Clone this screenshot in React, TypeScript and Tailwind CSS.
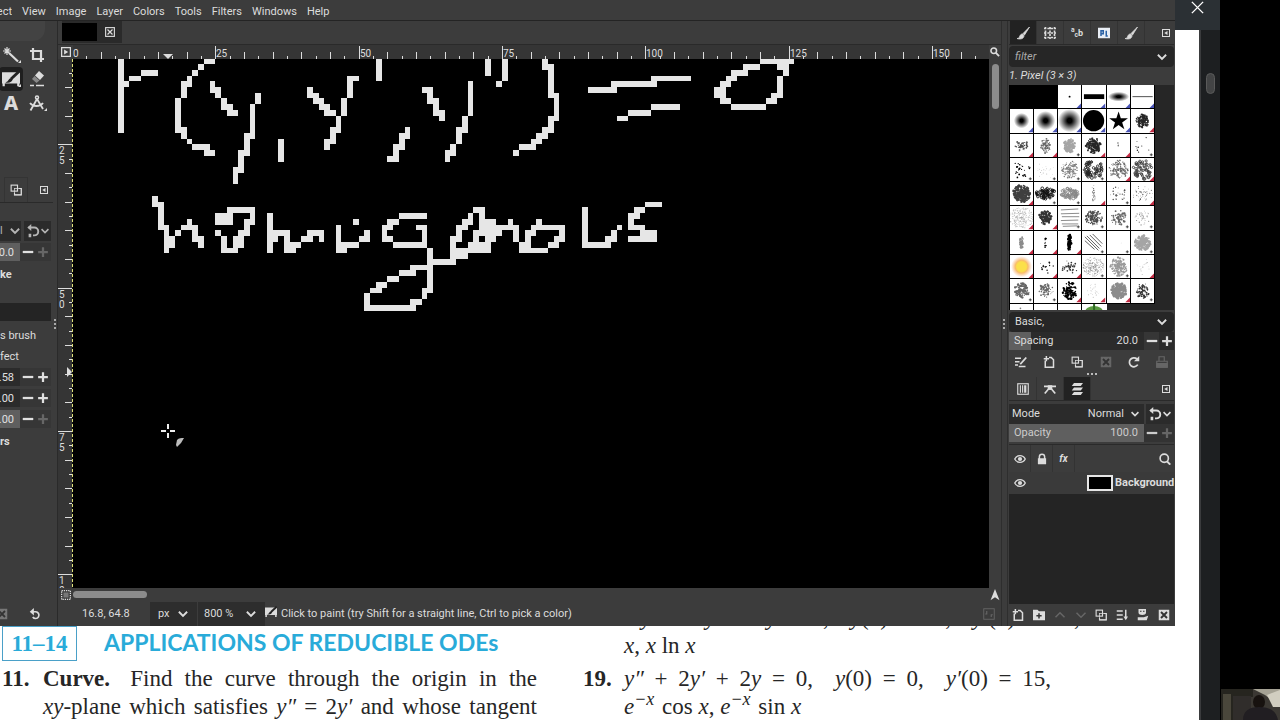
import React, { ReactNode } from "react";
import clsx from "clsx";

// one image pixel at 800 % zoom, in screen pixels
const CELL = 5.733;

type Run = [x: number, y: number, w: number, h: number];
type Tone = "blue" | "red" | "none";

interface BrushFixture {
  kind:
    | "black"
    | "dot"
    | "bar"
    | "oval"
    | "line"
    | "soft"
    | "circle"
    | "star"
    | "sun"
    | "lines"
    | "diagonal"
    | "pepper"
    | "splat";
  mark: Tone;
  size?: number;
  count?: number;
  rx?: number;
  ry?: number;
  dot?: number;
  alpha?: number;
}

const strokes: Run[] = [
  // F
  [8, 10, 1, 13], [9, 14, 1, 1], [10, 13, 2, 1], [12, 12, 3, 1],
  // (
  [23, 10, 2, 1], [22, 11, 1, 1], [21, 12, 1, 1], [20, 13, 1, 2], [19, 14, 1, 3],
  [18, 17, 1, 6], [19, 22, 1, 2], [20, 24, 1, 1], [21, 25, 3, 1], [23, 26, 2, 1],
  // y
  [24, 14, 1, 2], [25, 15, 1, 2], [26, 17, 1, 2], [27, 18, 1, 2], [28, 19, 1, 1],
  [32, 16, 1, 2], [31, 18, 1, 6], [30, 23, 1, 4], [29, 26, 1, 4], [28, 29, 1, 3],
  [36, 24, 1, 4],
  // y'
  [41, 15, 1, 2], [42, 16, 1, 2], [43, 17, 1, 2], [44, 18, 1, 2], [45, 19, 1, 1],
  [46, 20, 1, 3], [45, 22, 1, 3], [44, 24, 1, 2], [47, 17, 1, 3], [48, 13, 1, 4],
  [49, 13, 1, 1], [53, 10, 1, 4],
  [58, 22, 1, 2], [57, 23, 1, 3], [56, 25, 1, 3], [55, 27, 1, 1],
  // y''
  [61, 15, 2, 1], [62, 16, 1, 2], [63, 17, 1, 3], [64, 19, 1, 2], [69, 14, 1, 6],
  [68, 20, 1, 3], [67, 22, 1, 3], [66, 25, 1, 2], [65, 26, 1, 2],
  [72, 10, 1, 3], [75, 10, 1, 4], [74, 14, 1, 1],
  // )
  [82, 10, 1, 2], [83, 11, 1, 6], [84, 16, 1, 5], [83, 20, 1, 3], [82, 22, 1, 2],
  [81, 23, 1, 2], [80, 24, 1, 2], [78, 25, 2, 1], [77, 26, 1, 1],
  // =
  [90, 15, 5, 1], [94, 14, 8, 1], [101, 13, 7, 1], [95, 20, 2, 1], [97, 19, 4, 1], [101, 18, 5, 1],
  // 0
  [120, 10, 6, 1], [117, 11, 3, 1], [115, 12, 3, 1], [114, 13, 2, 1], [113, 14, 2, 1],
  [112, 15, 2, 2], [113, 17, 2, 1], [115, 18, 6, 1], [121, 17, 2, 1], [122, 16, 2, 1],
  [123, 13, 1, 3], [123, 11, 2, 1], [124, 12, 1, 1],
  // h
  [14, 34, 1, 2], [15, 35, 1, 5], [16, 39, 1, 5], [17, 41, 1, 2], [18, 40, 1, 1],
  [19, 39, 2, 1], [20, 38, 1, 1], [21, 39, 1, 3], [22, 41, 1, 2],
  // o
  [25, 37, 3, 2], [27, 36, 5, 1], [31, 37, 1, 2], [30, 38, 1, 3], [29, 40, 1, 3],
  [28, 41, 1, 3], [27, 43, 1, 1], [26, 41, 1, 3], [25, 40, 1, 1],
  // m
  [34, 37, 1, 7], [35, 40, 3, 1], [35, 41, 1, 1], [37, 41, 1, 1], [37, 42, 3, 1],
  [37, 43, 2, 1], [40, 41, 2, 1], [41, 40, 3, 1], [43, 41, 1, 1],
  // u
  [46, 39, 1, 5], [47, 43, 1, 1], [47, 42, 3, 1], [50, 41, 2, 1], [51, 40, 1, 1], [49, 38, 1, 1],
  // g
  [57, 37, 5, 1], [55, 38, 2, 1], [54, 39, 2, 1], [54, 40, 1, 1], [54, 41, 2, 1],
  [56, 42, 6, 1], [61, 39, 1, 3], [60, 39, 1, 1], [62, 43, 1, 8], [63, 45, 4, 1],
  [59, 46, 3, 1], [57, 47, 3, 1], [55, 48, 2, 1], [53, 49, 2, 1], [52, 50, 2, 1],
  [51, 51, 1, 2], [51, 53, 9, 1], [59, 52, 2, 1], [61, 50, 1, 2],
  // en
  [70, 36, 2, 1], [69, 37, 1, 1], [71, 37, 1, 1], [68, 38, 2, 1], [71, 38, 3, 1],
  [76, 38, 1, 1], [67, 39, 2, 1], [71, 39, 7, 1], [67, 40, 1, 1], [70, 40, 5, 1],
  [77, 40, 1, 2], [66, 41, 2, 1], [70, 41, 1, 1], [72, 41, 2, 1], [66, 42, 1, 1],
  [69, 42, 4, 1], [66, 43, 7, 1], [66, 44, 3, 1],
  // o
  [81, 38, 1, 1], [80, 39, 6, 1], [79, 40, 2, 1], [85, 40, 1, 1], [79, 41, 1, 1],
  [84, 41, 2, 1], [78, 42, 2, 1], [83, 42, 2, 1], [78, 43, 5, 1],
  // u
  [89, 36, 1, 7], [90, 42, 4, 1], [93, 41, 2, 1], [94, 40, 1, 1], [95, 39, 1, 1],
  // s
  [100, 35, 3, 1], [98, 36, 2, 1], [97, 37, 2, 1], [97, 38, 1, 1], [97, 39, 3, 1],
  [99, 40, 3, 1], [97, 41, 5, 1],
];

const splat = (
  mark: Tone,
  count: number,
  rx: number,
  ry: number,
  dot: number,
  alpha = 0.8
): BrushFixture => ({ kind: "splat", mark, count, rx, ry, dot, alpha });

const brushes: BrushFixture[] = [
  { kind: "black", mark: "none" },
  { kind: "black", mark: "none" },
  { kind: "dot", mark: "blue" },
  { kind: "bar", mark: "blue" },
  { kind: "oval", mark: "blue" },
  { kind: "line", mark: "blue" },
  { kind: "soft", mark: "blue", size: 8 },
  { kind: "soft", mark: "blue", size: 10 },
  { kind: "soft", mark: "blue", size: 12 },
  { kind: "circle", mark: "blue" },
  { kind: "star", mark: "blue" },
  splat("red", 150, 7, 7, 1, 0.85),
  splat("red", 50, 7, 6, 0.9, 0.7),
  splat("red", 60, 5, 8, 0.9, 0.6),
  splat("none", 110, 6, 7, 1.3, 0.35),
  splat("red", 150, 8, 8, 1.1, 0.85),
  splat("red", 3, 3, 4, 0.8, 0.6),
  splat("none", 9, 10, 10, 0.7, 0.9),
  splat("none", 26, 10, 10, 0.9, 1),
  splat("none", 22, 10, 10, 0.4, 0.5),
  splat("none", 120, 9, 9, 0.8, 0.5),
  { kind: "pepper", mark: "none", rx: 10, ry: 10, alpha: 0.9 },
  splat("red", 130, 10, 10, 0.8, 0.6),
  { kind: "pepper", mark: "red", rx: 10, ry: 10, alpha: 0.8 },
  splat("red", 230, 9, 9, 1.3, 0.75),
  { kind: "pepper", mark: "none", rx: 10, ry: 6, alpha: 1 },
  { kind: "pepper", mark: "none", rx: 9, ry: 6, alpha: 0.5 },
  splat("red", 26, 2, 10, 0.6, 0.6),
  splat("none", 24, 9, 8, 0.8, 0.7),
  splat("red", 46, 11, 8, 0.6, 0.6),
  splat("red", 260, 13, 11, 0.5, 0.35),
  splat("red", 110, 7, 7, 1.2, 0.8),
  { kind: "lines", mark: "none" },
  splat("none", 110, 9, 8, 1, 0.7),
  splat("none", 60, 8, 8, 1, 0.6),
  splat("none", 36, 8, 8, 0.6, 0.5),
  splat("red", 50, 2, 6, 1, 0.45),
  splat("red", 14, 1, 6, 0.9, 1),
  splat("red", 90, 2, 9, 1.1, 1),
  { kind: "diagonal", mark: "none" },
  splat("none", 1, 3, 3, 0.4, 0.4),
  splat("none", 150, 8, 8, 1.4, 0.35),
  { kind: "sun", mark: "red" },
  splat("red", 16, 9, 8, 0.9, 0.9),
  splat("red", 32, 9, 7, 0.9, 0.8),
  splat("none", 260, 11, 10, 0.5, 0.45),
  splat("none", 160, 9, 10, 1, 0.4),
  splat("red", 22, 8, 9, 0.5, 0.3),
  splat("none", 100, 8, 8, 1.2, 0.6),
  splat("none", 80, 8, 7, 0.9, 0.6),
  splat("red", 90, 8, 9, 1.2, 1),
  splat("red", 24, 8, 9, 0.5, 0.3),
  splat("red", 150, 8, 8, 1.5, 0.45),
  splat("none", 60, 8, 8, 1, 0.8),
];

const lastRow: BrushFixture[] = [
  splat("none", 8, 5, 10, 0.8, 0.5),
  splat("none", 0, 8, 8, 1, 0.5),
  splat("none", 8, 8, 10, 0.8, 0.8),
];

const starPath = "M12 2.500l2.300 7h7.400l-6 4.300 2.300 7.200-6-4.400-6 4.400 2.300-7.200-6-4.300h7.400z";

const random = (seed: number) => {
  let s = seed * 7919 + 17;
  return () => {
    s = (s * 16807) % 2147483647;
    return s / 2147483647;
  };
};

const BrushDrawing = ({ brush, seed }: { brush: BrushFixture; seed: number }) => {
  const next = random(seed);
  const { kind, size = 8, count = 0, rx = 8, ry = 8, dot = 1, alpha = 1 } = brush;
  next();
  next();

  switch (kind) {
    case "dot":
      return <circle cx="12" cy="12" r="1" />;
    case "bar":
      return <rect x="2" y="9.500" width="21" height="5" />;
    case "oval":
      return <ellipse cx="12" cy="12" rx="11" ry="5" fill="url(#soft)" />;
    case "line":
      return <rect x="1.500" y="11.500" width="21" height="1" opacity="0.7" />;
    case "soft":
      return <circle cx="12" cy="12" r={size} fill="url(#soft)" />;
    case "circle":
      return <circle cx="12" cy="12" r="11" />;
    case "star":
      return <path d={starPath} />;
    case "sun":
      return <circle cx="12" cy="12" r="11" fill="url(#sun)" />;
    case "lines":
      return (
        <path
          d="M3 4l18-1M3 8l19-.5M4 11h18M3 15l18-.5M4 18.500h17M5 21l15-.5"
          stroke="#555"
          strokeWidth="0.7"
        />
      );
    case "diagonal":
      return (
        <path
          d="M3 6l14 14M5 5l13 13M8 4l12 12M11 3l10 10M3 10l10 9"
          stroke="#333"
          strokeWidth="0.8"
          fill="none"
        />
      );
    case "pepper":
      return (
        <g stroke="#111" strokeWidth="0.9" fill="none" opacity={alpha}>
          {Array.from({ length: 60 }, (_, i) => {
            const angle = next() * Math.PI * 2;
            const reach = Math.sqrt(next());
            return (
              <circle
                key={i}
                cx={12 + Math.cos(angle) * reach * rx}
                cy={12 + Math.sin(angle) * reach * ry}
                r={0.7 + next() * 0.8}
              />
            );
          })}
        </g>
      );
    case "splat":
      return (
        <g opacity={alpha}>
          {Array.from({ length: count }, (_, i) => {
            const angle = next() * Math.PI * 2;
            const reach = Math.pow(next(), 0.7);
            return (
              <circle
                key={i}
                cx={12 + Math.cos(angle) * reach * rx}
                cy={12 + Math.sin(angle) * reach * ry}
                r={dot * (0.5 + next() * 0.6)}
              />
            );
          })}
        </g>
      );
    default:
      return null;
  }
};

const Brush = ({ brush, seed }: { brush: BrushFixture; seed: number }) => (
  <button
    aria-label={`Brush ${seed}`}
    className={clsx(
      "block overflow-hidden border-r border-b border-black",
      brush.kind === "black" ? "bg-black" : "bg-white"
    )}
  >
    <svg viewBox="0 0 24 24" className="block h-full w-full">
      <BrushDrawing brush={brush} seed={seed} />
      {brush.mark === "none" && brush.kind !== "black" && (
        <path d="M19.500 21.500h3M21 20v3" stroke="#222" strokeWidth="0.8" />
      )}
      {brush.mark !== "none" && (
        <path d="M24 19v5h-5z" fill={brush.mark === "blue" ? "#4a55b8" : "#c32c44"} />
      )}
    </svg>
  </button>
);

interface IconProps {
  children: ReactNode;
  className?: string;
}

const Icon = ({ children, className = "size-4" }: IconProps) => (
  <svg
    viewBox="0 0 16 16"
    className={clsx("block shrink-0", className)}
    fill="none"
    stroke="currentColor"
    strokeWidth="1.5"
  >
    {children}
  </svg>
);

const ChevronIcon = ({ className = "size-3" }: { className?: string }) => (
  <Icon className={className}>
    <path d="M2.500 5l5.500 5.500L13.500 5" strokeWidth="2.500" />
  </Icon>
);

const MinusIcon = () => (
  <Icon className="size-3">
    <path d="M1 8h14" strokeWidth="3" />
  </Icon>
);

const PlusIcon = () => (
  <Icon className="size-3">
    <path d="M1.500 8h13M8 1.500v13" strokeWidth="3" />
  </Icon>
);

const MenuTabIcon = () => (
  <Icon className="size-2">
    <rect x="1" y="1" width="14" height="14" strokeWidth="2" />
    <path d="M11 4v8L4.500 8z" fill="currentColor" stroke="none" />
  </Icon>
);

const BrushIcon = () => (
  <Icon>
    <path
      d="M14.500 2L8 8.500l1.500 1.500zM7.500 9c-2 0-2.500 1.500-3 3-.3 1-1.500 1.500-2.500 1.500 3 1 7 .5 7-3z"
      fill="currentColor"
      strokeWidth="0.8"
    />
  </Icon>
);

const PaintIcon = ({ className }: { className?: string }) => (
  <Icon className={className}>
    <path d="M0 2h16v10H0z" fill="currentColor" stroke="none" />
    <path d="M15.500 1L8 8" stroke="#222" strokeWidth="2.500" />
    <path d="M9 7c-2 0-3 1-4 3l-2 1c3 1 6 0 6.500-3z" fill="#222" stroke="none" />
    <path d="M1.500 11.500v3M14.500 11.500v3" strokeWidth="2" />
  </Icon>
);

const ResetIcon = ({ className }: { className?: string }) => (
  <Icon className={className}>
    <path d="M3 5h6a4.500 4.500 0 1 1-4 7" strokeWidth="2.200" />
    <path d="M6.500 0v10L1 5z" fill="currentColor" stroke="none" />
  </Icon>
);

const ModeIcon = () => (
  <Icon className="size-3.5">
    <path d="M3 4h6.500a4.500 4.500 0 0 1 0 9H8" strokeWidth="2.200" />
    <path d="M6 0v8L1.500 4zM3 11h3v4H3z" fill="currentColor" stroke="none" />
  </Icon>
);

const DuplicateIcon = () => (
  <Icon className="size-3">
    <rect x="1.500" y="1.500" width="8.500" height="8" />
    <path d="M12 6h3v8.500H6V12" />
    <rect x="6" y="6" width="9" height="8.500" strokeWidth="1" />
  </Icon>
);

const NewPageIcon = () => (
  <Icon className="size-3">
    <path d="M3 6v9h11V5l-3-3H8M1 3.500h7M4.500 0v7" strokeWidth="2" />
  </Icon>
);

const DeleteIcon = () => (
  <Icon className="size-3">
    <path d="M1 1h14v14H1z" fill="currentColor" stroke="none" />
    <path d="M4 4l8 8M12 4l-8 8" stroke="#333" strokeWidth="2.500" />
  </Icon>
);

const EyeIcon = () => (
  <Icon className="size-3">
    <path d="M1 8c3-6 11-6 14 0-3 6-11 6-14 0z" strokeWidth="1.800" />
    <circle cx="8" cy="8" r="2.800" fill="currentColor" stroke="none" />
  </Icon>
);

const SearchIcon = () => (
  <Icon className="size-3">
    <circle cx="7" cy="7" r="5.500" strokeWidth="2.200" />
    <path d="M10.500 11l4.500 4.500" strokeWidth="2.500" />
  </Icon>
);

const tools: { name: string; icon: ReactNode }[] = [
  {
    name: "Fuzzy select",
    icon: (
      <Icon>
        <path d="M6 6l9 8.500" strokeWidth="2.200" />
        <path d="M4 0v8M0 4h8M1.500 1.500l5 5M6.500 1.500l-5 5" strokeWidth="1.200" />
      </Icon>
    ),
  },
  {
    name: "Crop",
    icon: (
      <Icon>
        <path d="M4 1v11h11M1 4h11v11" strokeWidth="2.200" />
      </Icon>
    ),
  },
  { name: "Pencil", icon: <PaintIcon className="size-[18px]" /> },
  {
    name: "Eraser",
    icon: (
      <Icon>
        <path d="M10 0l5 4.500-4 4.500-5-4.500z" fill="currentColor" stroke="none" />
        <path d="M5.500 5l5 4.500-3 2.500-4.500-4z" fill="#888" stroke="none" />
        <path d="M1 14.500h4M7 14.500h8" />
      </Icon>
    ),
  },
  {
    name: "Text",
    icon: <span className="font-['Noto_Sans',sans-serif] text-xl leading-4 font-extrabold">A</span>,
  },
  {
    name: "Measure",
    icon: (
      <Icon>
        <path d="M8 4L1.500 15.500M8 4l6 10M1 8c3 4 10 4 13 0" strokeWidth="1.800" />
        <circle cx="8" cy="2.500" r="1.500" />
      </Icon>
    ),
  },
];

interface SpinRowProps {
  value: string;
  full?: boolean;
}

const SpinRow = ({ value, full = false }: SpinRowProps) => (
  <div className="flex h-[18px] items-center bg-[#2b2b2b] text-[#e0e0e0]">
    <input
      aria-label={`Value ${value}`}
      defaultValue={value}
      className={clsx(
        "-ml-4 h-full w-9 min-w-0 pr-1.5 text-right outline-none",
        full ? "bg-[#5f5f5f]" : "bg-[#2b2b2b]"
      )}
    />
    <button aria-label="Decrease" className="flex h-full flex-1 items-center justify-center bg-[#363636]">
      <MinusIcon />
    </button>
    <button
      aria-label="Increase"
      className={clsx("flex h-full flex-1 items-center justify-center bg-[#363636]", full && "text-[#666]")}
    >
      <PlusIcon />
    </button>
  </div>
);

const Toolbox = () => (
  <aside className="flex w-[53px] shrink-0 flex-col overflow-hidden">
    <div className="mr-2 h-5 rounded-br-xl bg-[#434343]" />
    <div className="-ml-px grid grid-cols-[24px_24px] gap-x-0.5 pt-0.5">
      {tools.map((tool) => (
        <button
          key={tool.name}
          aria-label={tool.name}
          className={clsx(
            "relative flex h-6 items-center justify-center rounded-sm",
            tool.name === "Pencil" && "bg-[#1f1f1f]"
          )}
        >
          {tool.icon}
          {tool.name !== "Eraser" && tool.name !== "Crop" && tool.name !== "Text" && (
            <svg viewBox="0 0 3 3" className="absolute right-0.5 bottom-1 size-[3px] fill-[#ddd]">
              <path d="M3 0v3H0z" />
            </svg>
          )}
        </button>
      ))}
    </div>
    <div className="mt-[62px] flex h-[26px] items-center border-b border-[#2a2a2a] pl-1">
      <button aria-label="Tool options" className="flex h-full w-6 items-center justify-center border border-b-0 border-[#343434]">
        <DuplicateIcon />
      </button>
      <button aria-label="Configure tab" className="ml-3">
        <MenuTabIcon />
      </button>
    </div>
    <div className="mt-[18px] flex h-5 gap-[3px] pr-0.5 text-[#b5b5b5]">
      <button className="flex w-[21px] items-center justify-between bg-[#2b2b2b]">
        l
        <ChevronIcon />
      </button>
      <button aria-label="Switch mode group" className="flex flex-1 items-center justify-center bg-[#2b2b2b]">
        <ModeIcon />
        <ChevronIcon className="size-2.5" />
      </button>
    </div>
    <div className="mt-0.5 pr-0.5">
      <SpinRow value="100.0" full />
    </div>
    <p className="mt-1 leading-5 font-bold">ke</p>
    <div className="mt-[18px] mr-0.5 h-[18px] bg-[#242424]" />
    <p className="mt-[5px] leading-5">s brush</p>
    <p className="leading-[22px]">fect</p>
    <div className="flex flex-col gap-[3px] pr-0.5">
      <SpinRow value="0.58" />
      <SpinRow value="1.00" />
      <SpinRow value="1.00" full />
    </div>
    <p className="mt-1 leading-5 font-bold">rs</p>
    <div className="mt-auto flex h-6 items-center justify-between pr-3">
      <button aria-label="Delete preset" className="-ml-1 text-[#777]">
        <DeleteIcon />
      </button>
      <button aria-label="Reset tool options">
        <ResetIcon className="size-3" />
      </button>
    </div>
  </aside>
);

const Splitter = () => (
  <div className="flex w-[5px] shrink-0 flex-col items-center justify-center border-r border-[#2a2a2a] text-[#aaa]">
    <svg viewBox="0 0 3 10" className="h-2.5 w-[3px]" fill="currentColor">
      <path d="M0 0h2v2H0zM0 4h2v2H0zM0 8h2v2H0z" />
    </svg>
  </div>
);

const ticks = Array.from({ length: 64 }, (_, i) => i * 2.5);

const HorizontalRuler = () => (
  <svg className="block h-[14px] min-w-0 flex-1 bg-[#353535]" fill="#ddd">
    {ticks.map((t) => {
      const h = t % 25 === 0 ? 13 : t % 5 === 0 ? 7 : 3;
      return <rect key={t} x={Math.round(t * CELL - 1)} y={14 - h} width="1" height={h} />;
    })}
    {ticks
      .filter((t) => t % 25 === 0)
      .map((t) => (
        <text key={t} x={Math.round(t * CELL)} y="12" fontSize="10">
          {t}
        </text>
      ))}
    <path d="M90 9h10l-5 5z" />
  </svg>
);

const VerticalRuler = () => (
  <svg className="block h-full w-[15px] shrink-0 bg-[#353535]" fill="#ddd">
    {ticks
      .filter((t) => t >= 10 && t < 102)
      .map((t) => {
        const w = t % 25 === 0 ? 14 : t % 5 === 0 ? 7 : 3;
        return <rect key={t} x={14 - w} y={Math.round(t * CELL - 58)} width={w} height="1" />;
      })}
    {[25, 50, 75, 100].map((t) =>
      String(t)
        .split("")
        .map((digit, i) => (
          <text key={`${t}-${i}`} x="1" y={Math.round(t * CELL - 48 + i * 10)} fontSize="10">
            {digit}
          </text>
        ))
    )}
    <path d="M9 308v10l5-5z" />
    <path d="M14.500 0v600" stroke="#111" />
    <path d="M14.500 0v600" stroke="#dfe27a" strokeDasharray="3 2" />
  </svg>
);

const Drawing = () => (
  <svg className="block h-full min-w-0 flex-1 bg-black" role="img" aria-label="Canvas">
    <g transform={`translate(-1 -58) scale(${CELL})`} fill="#e6e6e6" shapeRendering="crispEdges">
      {strokes.map(([x, y, w, h]) => (
        <rect key={`${x}-${y}`} x={x} y={y} width={w} height={h} />
      ))}
    </g>
    <g transform="translate(95 372)" stroke="#eee" strokeWidth="2">
      <path d="M-7 0h5M2 0h5M0-7v5M0 2v5" />
      <path d="M8 14l1-5c2-2 4-2 7-2l-3 5-4 4z" fill="#bbb" stroke="none" />
    </g>
  </svg>
);

const ImageWindow = () => (
  <main className="flex min-w-0 flex-1 flex-col">
    <div className="flex h-6 items-start border-b border-[#2a2a2a] px-1">
      <div className="flex h-[22px] w-[60px] items-center bg-[#2a2a2a]">
        <div className="h-[18px] w-[35px] bg-black" />
        <button aria-label="Close image" className="ml-2">
          <Icon className="size-2.5">
            <rect x="1" y="1" width="14" height="14" strokeWidth="1.800" />
            <path d="M4 4l8 8M12 4l-8 8" strokeWidth="2" />
          </Icon>
        </button>
      </div>
    </div>
    <div className="flex min-h-0 flex-1">
      <div className="flex min-w-0 flex-1 flex-col">
        <div className="flex">
          <button aria-label="Image menu" className="flex w-[15px] items-center justify-center">
            <Icon className="size-2.5">
              <rect x="1" y="1" width="14" height="14" strokeWidth="2" />
              <path d="M5 4v8l6.500-4z" fill="currentColor" stroke="none" />
            </Icon>
          </button>
          <HorizontalRuler />
        </div>
        <div className="flex min-h-0 flex-1">
          <VerticalRuler />
          <Drawing />
        </div>
        <div className="flex h-[13px] items-center">
          <button aria-label="Quick mask" className="flex w-[15px] items-center justify-center">
            <Icon className="size-2.5">
              <rect x="1" y="1" width="14" height="14" strokeDasharray="2 1.500" strokeWidth="2" />
              <path d="M4 4h8v8H4z" fill="#777" stroke="none" />
            </Icon>
          </button>
          <div className="h-[7px] w-[74px] rounded-full bg-[#8c8c8c]" />
        </div>
      </div>
      <div className="flex w-3 flex-col items-center">
        <div className="flex h-[14px] items-center">
          <Icon className="size-2.5">
            <circle cx="6" cy="6" r="4.500" strokeWidth="2.500" />
            <path d="M9.500 9.500l5 5" strokeWidth="3" />
          </Icon>
        </div>
        <div className="mt-[5px] h-[45px] w-[7px] rounded-full bg-[#8c8c8c]" />
        <div className="mt-auto flex h-[13px] items-center">
          <Icon className="size-3">
            <path d="M8 0l6 15-6-4-6 4z" fill="currentColor" stroke="none" />
          </Icon>
        </div>
      </div>
    </div>
    <footer className="flex h-[25px] items-center pt-px">
      <output className="w-[92px] pl-6 whitespace-nowrap">16.8, 64.8</output>
      <button className="flex h-full w-[47px] items-center justify-between bg-[#2d2d2d] px-2">
        px
        <ChevronIcon />
      </button>
      <button className="ml-px flex h-full w-[67px] items-center justify-between bg-[#2d2d2d] pr-2 pl-1.5 whitespace-nowrap">
        800 %
        <ChevronIcon />
      </button>
      <PaintIcon className="mb-1 size-3" />
      <p className="ml-1 truncate">Click to paint (try Shift for a straight line, Ctrl to pick a color)</p>
      <div className="mr-1.5 ml-auto text-[#666]">
        <Icon className="size-3">
          <rect x="1" y="1" width="14" height="14" strokeWidth="1.200" />
          <path d="M5 4v4H3M11 12V9h2" />
        </Icon>
      </div>
    </footer>
  </main>
);

interface DockTabProps {
  label: string;
  active?: boolean;
  children: ReactNode;
}

const DockTab = ({ label, active = false, children }: DockTabProps) => (
  <button
    aria-label={label}
    className={clsx(
      "flex w-[27px] items-center justify-center border-r border-[#333]",
      active && "bg-[#222]"
    )}
  >
    {children}
  </button>
);

const SpacingRow = () => (
  <label className="flex h-[18px] items-center bg-[linear-gradient(to_right,#5f5f5f_22px,#2b2b2b_22px)] pl-[5px]">
    Spacing
    <input
      aria-label="Spacing"
      defaultValue="20.0"
      className="ml-auto w-10 bg-transparent pr-1.5 text-right outline-none"
    />
    <button aria-label="Less spacing" className="flex h-full w-[15px] items-center justify-center bg-[#363636]">
      <MinusIcon />
    </button>
    <button aria-label="More spacing" className="flex h-full w-[15px] items-center justify-center">
      <PlusIcon />
    </button>
  </label>
);

const BrushDock = () => (
  <section className="flex flex-col">
    <div className="flex h-6 border-b border-[#2a2a2a] pl-px">
      <DockTab label="Brushes" active>
        <BrushIcon />
      </DockTab>
      <DockTab label="Patterns">
        <Icon className="size-3">
          <path d="M2 0v16M8 0v16M14 0v16M0 2h16M0 8h16M0 14h16" strokeWidth="2.200" strokeDasharray="3 1.500" />
        </Icon>
      </DockTab>
      <DockTab label="Fonts">
        <span className="text-[9px] leading-2 font-bold">
          <sup>a</sup>
          <sub>c</sub>b
        </span>
      </DockTab>
      <DockTab label="Document history">
        <Icon className="size-3">
          <rect x="0" y="1" width="16" height="14" fill="#e9eef5" stroke="none" />
          <path d="M4 12V5h3v4H4M11 5v7M10 12h3" stroke="#2b62a5" strokeWidth="2" />
        </Icon>
      </DockTab>
      <DockTab label="Brush editor">
        <BrushIcon />
      </DockTab>
      <button aria-label="Configure tab" className="mr-1 ml-auto">
        <MenuTabIcon />
      </button>
    </div>
    <div className="mt-px flex h-[21px] items-center rounded-sm bg-[#262626] pr-1.5 pl-1.5">
      <input
        aria-label="Filter"
        placeholder="filter"
        className="min-w-0 flex-1 bg-transparent italic outline-none placeholder:text-[#aaa]"
      />
      <ChevronIcon />
    </div>
    <p className="flex h-[18px] items-center italic">1. Pixel (3 × 3)</p>
    <div className="h-[225px] overflow-hidden bg-[#262626]">
      <svg className="absolute size-0">
        <defs>
          <radialGradient id="soft">
            <stop offset="0.2" stopColor="#000" />
            <stop offset="1" stopColor="#000" stopOpacity="0" />
          </radialGradient>
          <radialGradient id="sun">
            <stop offset="0.45" stopColor="#fbe04a" />
            <stop offset="0.6" stopColor="#f9bd6a" />
            <stop offset="1" stopColor="#f9bd9a" stopOpacity="0" />
          </radialGradient>
        </defs>
      </svg>
      <div className="grid h-[243px] w-[146px] grid-cols-6 grid-rows-10 border-l border-black">
        {brushes.concat(lastRow).map((brush, i) => (
          <Brush key={i} brush={brush} seed={i + 1} />
        ))}
        <button aria-label="Pepper brush" className="bg-white">
          <svg viewBox="0 0 24 24" className="block h-full w-full">
            <ellipse cx="12" cy="8" rx="9" ry="6" fill="#5b9a41" />
            <path d="M12 0v6" stroke="#2f6b24" strokeWidth="2" />
          </svg>
        </button>
      </div>
    </div>
    <button className="mt-0.5 flex h-5 items-center justify-between rounded-sm bg-[#262626] px-1.5">
      Basic,
      <ChevronIcon />
    </button>
    <SpacingRow />
    <div className="flex h-[23px] items-center justify-between pr-1.5 pl-1.5">
      <button aria-label="Edit brush">
        <Icon className="size-3">
          <path d="M0 3h8M0 7.500h6M0 12h4M5 14h9" strokeWidth="2" />
          <path d="M15 2L7 11" strokeWidth="2.500" />
        </Icon>
      </button>
      <button aria-label="New brush">
        <NewPageIcon />
      </button>
      <button aria-label="Duplicate brush">
        <DuplicateIcon />
      </button>
      <button aria-label="Delete brush" className="text-[#666]">
        <DeleteIcon />
      </button>
      <button aria-label="Refresh brushes">
        <Icon className="size-3">
          <path d="M13 11.500A6 6 0 1 1 12 4" strokeWidth="2.300" />
          <path d="M15 0v7H8z" fill="currentColor" stroke="none" />
        </Icon>
      </button>
      <button aria-label="Open as image" className="text-[#666]">
        <Icon className="size-3">
          <path d="M4 7V1h7v6M1 7h14v8H1z" />
          <path d="M1 10h14v5H1z" fill="currentColor" />
        </Icon>
      </button>
    </div>
  </section>
);

const LayerDock = () => (
  <section className="flex min-h-0 flex-1 flex-col">
    <svg viewBox="0 0 10 2" className="mx-auto h-0.5 w-2.5 shrink-0 fill-[#bbb]">
      <path d="M0 0h2v2H0zM4 0h2v2H4zM8 0h2v2H8z" />
    </svg>
    <div className="mt-0.5 flex h-6 shrink-0 border-b border-[#2a2a2a] pl-px">
      <DockTab label="Channels">
        <Icon className="size-3">
          <rect x="1" y="1" width="14" height="14" />
          <path d="M4.500 3v10M7.500 3v10" />
          <path d="M11 3v10" strokeWidth="3" />
        </Icon>
      </DockTab>
      <DockTab label="Paths">
        <Icon className="size-3">
          <path d="M0 4.500h16M1 14l5-6h4l5 6" strokeWidth="2.200" />
          <path d="M5 3h6v6H5z" fill="currentColor" stroke="none" />
        </Icon>
      </DockTab>
      <DockTab label="Layers" active>
        <Icon className="size-3">
          <path d="M4 0h12l-3 4H1zM4 6h12l-3 4H1zM4 12h12l-3 4H1z" fill="currentColor" stroke="none" />
        </Icon>
      </DockTab>
      <button aria-label="Configure tab" className="mr-1 ml-auto">
        <MenuTabIcon />
      </button>
    </div>
    <div className="mt-[3px] flex h-5 shrink-0 gap-0.5">
      <button className="flex flex-1 items-center bg-[#2b2b2b] pl-[3px]">
        Mode
        <span className="mr-1.5 ml-auto">Normal</span>
        <ChevronIcon className="mr-1 size-2.5" />
      </button>
      <button aria-label="Switch mode group" className="flex w-7 items-center justify-center bg-[#2b2b2b]">
        <ModeIcon />
        <ChevronIcon className="size-2.5" />
      </button>
    </div>
    <label className="flex h-[18px] shrink-0 items-center bg-[#5f5f5f] pl-[5px] text-[#ccc]">
      Opacity
      <input
        aria-label="Opacity"
        defaultValue="100.0"
        className="ml-auto w-12 bg-transparent pr-1.5 text-right outline-none"
      />
      <button aria-label="Less opacity" className="flex h-full w-[15px] items-center justify-center bg-[#333]">
        <MinusIcon />
      </button>
      <button aria-label="More opacity" className="flex h-full w-[15px] items-center justify-center bg-[#333] text-[#666]">
        <PlusIcon />
      </button>
    </label>
    <div className="mt-0.5 flex h-7 shrink-0 items-center border-t border-[#2a2a2a] pr-[3px]">
      <span className="flex h-full w-[22px] items-center justify-center border-r border-[#333]">
        <EyeIcon />
      </span>
      <span className="flex h-full w-[22px] items-center justify-center border-r border-[#333]">
        <Icon className="size-3">
          <path d="M2.500 7h11v8h-11z" fill="currentColor" stroke="none" />
          <path d="M4.500 8V5a3.500 3.500 0 0 1 7 0v3" strokeWidth="2" />
        </Icon>
      </span>
      <span className="flex h-full w-[22px] items-center justify-center border-r border-[#333] text-[10px] font-bold italic">
        fx
      </span>
      <button aria-label="Search layers" className="ml-auto">
        <SearchIcon />
      </button>
    </div>
    <div className="min-h-0 flex-1 bg-[#242424]">
      <div className="flex h-[22px] items-center overflow-hidden bg-[#3a3a3a] pl-[5px]">
        <EyeIcon />
        <div className="ml-[61px] h-4 w-[26px] shrink-0 border-2 border-[#e6e6e6] bg-black" />
        <span className="ml-0.5 font-bold">Background</span>
      </div>
    </div>
    <div className="flex h-[22px] shrink-0 items-center justify-between pr-1 pl-[3px]">
      <button aria-label="New layer">
        <NewPageIcon />
      </button>
      <button aria-label="New layer group">
        <Icon className="size-3">
          <path d="M0 1h6l2 2h8v12H0z" fill="currentColor" stroke="none" />
          <path d="M8 5.500v7M4.500 9h7" stroke="#333" strokeWidth="2" />
        </Icon>
      </button>
      <button aria-label="Raise layer" className="text-[#666]">
        <Icon className="size-3">
          <path d="M2 11l6-6 6 6" strokeWidth="2" />
        </Icon>
      </button>
      <button aria-label="Lower layer" className="text-[#666]">
        <Icon className="size-3">
          <path d="M2 5l6 6 6-6" strokeWidth="2" />
        </Icon>
      </button>
      <button aria-label="Duplicate layer">
        <DuplicateIcon />
      </button>
      <button aria-label="Merge layer">
        <Icon className="size-3">
          <path d="M1 2.500h8M1 8h8M1 13.500h8M13 1v12" strokeWidth="2" />
          <path d="M10 10h6l-3 5z" fill="currentColor" stroke="none" />
        </Icon>
      </button>
      <button aria-label="Add mask">
        <Icon className="size-3">
          <path d="M2 0h10v5c0 4-10 4-10 0zM1 11h8l6-2-2 6H1z" fill="currentColor" stroke="none" />
          <path d="M4 3h2M8 3h2" stroke="#333" />
        </Icon>
      </button>
      <button aria-label="Delete layer">
        <DeleteIcon />
      </button>
    </div>
  </section>
);

const menuItems = ["View", "Image", "Layer", "Colors", "Tools", "Filters", "Windows", "Help"];

const Editor = () => (
  <div className="flex min-h-0 flex-1 flex-col overflow-hidden bg-[#3c3c3c] font-[Roboto,'Noto_Sans',sans-serif] text-[11px] leading-4 text-[#dcdcdc]">
    <nav className="flex h-[21px] items-center gap-2.5 border-b border-[#242424] pt-1">
      <button className="flex w-3 justify-end overflow-hidden">ect</button>
      {menuItems.map((item) => (
        <button key={item}>{item}</button>
      ))}
    </nav>
    <div className="flex min-h-0 flex-1">
      <Toolbox />
      <Splitter />
      <ImageWindow />
      <div className="flex w-[7px] shrink-0 items-center justify-center border-x border-[#2e2e2e]">
        <svg viewBox="0 0 3 10" className="h-2.5 w-[3px] fill-[#aaa]">
          <path d="M0 0h2v2H0zM0 4h2v2H0zM0 8h2v2H0z" />
        </svg>
      </div>
      <aside className="flex w-[167px] shrink-0 flex-col px-px">
        <BrushDock />
        <LayerDock />
      </aside>
    </div>
  </div>
);

const Op = ({ children }: { children: string }) => <span className="px-[5px]">{children}</span>;

const Exponent = () => <sup className="pr-0.5 text-lg leading-none italic">−x</sup>;

const Textbook = () => (
  <article className="flex h-[94px] shrink-0 overflow-hidden bg-white font-['Liberation_Serif',serif] text-[23px] leading-7 text-[#262626]">
    <section className="w-[537px] shrink-0 pl-0.5">
      <div className="flex h-[35px] items-center text-[#29abd9]">
        <span className="flex h-full w-[75px] items-center justify-center border border-[#4aa0c8] font-bold">
          11–14
        </span>
        <h2 className="mb-1 ml-[27px] font-['Lato',sans-serif] font-bold whitespace-nowrap">
          APPLICATIONS OF REDUCIBLE ODEs
        </h2>
      </div>
      <div className="mt-1 flex">
        <b className="w-[41px] shrink-0">11.</b>
        <div className="flex-1 whitespace-nowrap">
          <p className="[text-align-last:justify]">
            <b className="mr-2">Curve.</b> Find the curve through the origin in the
          </p>
          <p className="[text-align-last:justify]">
            <i>xy</i>-plane which satisfies <i>y″</i> = 2<i>y′</i> and whose tangent
          </p>
        </div>
      </div>
    </section>
    <section className="ml-[46px] flex shrink-0 whitespace-nowrap">
      <b className="w-[41px] pt-[39px]">19.</b>
      <div className="-mt-[22px]">
        <p className="flex gap-[22px]">
          <span>
            <i>x</i>²<i>y″</i> <Op>+</Op> <i>xy′</i> <Op>−</Op> 4<i>y</i> <Op>=</Op> 0,
          </span>
          <span>
            <i>y</i>(1) <Op>=</Op> 12,
          </span>
          <span>
            <i>y′</i>(1) <Op>=</Op> −6,
          </span>
        </p>
        <p>
          <i>x</i>, <i>x</i> ln <i>x</i>
        </p>
        <p className="mt-[5px] flex gap-[22px]">
          <span>
            <i>y″</i> <Op>+</Op> 2<i>y′</i> <Op>+</Op> 2<i>y</i> <Op>=</Op> 0,
          </span>
          <span>
            <i>y</i>(0) <Op>=</Op> 0,
          </span>
          <span>
            <i>y′</i>(0) <Op>=</Op> 15,
          </span>
        </p>
        <p>
          <i>e</i>
          <Exponent /> cos <i>x</i>, <i>e</i>
          <Exponent /> sin <i>x</i>
        </p>
      </div>
    </section>
  </article>
);

const Viewer = () => (
  <aside className="flex w-[45px] shrink-0 flex-col">
    <header className="flex h-[30px] items-start justify-center bg-[#2b3034] text-white">
      <button aria-label="Close">
        <Icon className="size-[15px]">
          <path d="M2 2l12 12M14 2L2 14" />
        </Icon>
      </button>
    </header>
    <div className="flex flex-1">
      <div className="flex-1 bg-white" />
      <div className="w-[21px] border-l-2 border-[#3a3b3d] bg-[#1d1f21]">
        <div className="mx-auto mt-[43px] h-[21px] w-[9px] rounded-full border border-[#5a5a5a] bg-[#434445]" />
      </div>
    </div>
  </aside>
);

const Webcam = () => (
  <svg viewBox="0 0 59 31" className="ml-px block h-[31px] w-[59px]">
    <rect width="59" height="31" fill="#3b3833" />
    <path d="M0 0h32v8H12v23H0z" fill="#26251f" />
    <path d="M2 5h8v26H2z" fill="#4a473b" />
    <path d="M12 7h18v24H12z" fill="#302d2b" />
    <path d="M32 0h27v6l-11 3-4-3z" fill="#a5a294" />
    <path d="M46 6l13-5v17h-7z" fill="#d1cec0" />
    <ellipse cx="38" cy="13" rx="6" ry="7" fill="#17120f" />
    <path d="M22 31c0-9 6-13 16-13s17 3 19 13z" fill="#211e22" />
  </svg>
);

const App = () => (
  <div className="flex h-screen w-full overflow-hidden bg-black">
    <div className="flex min-w-0 flex-1 flex-col">
      <Editor />
      <Textbook />
    </div>
    <Viewer />
    <div className="flex w-[60px] shrink-0 flex-col justify-end">
      <Webcam />
    </div>
  </div>
);

export default App;
